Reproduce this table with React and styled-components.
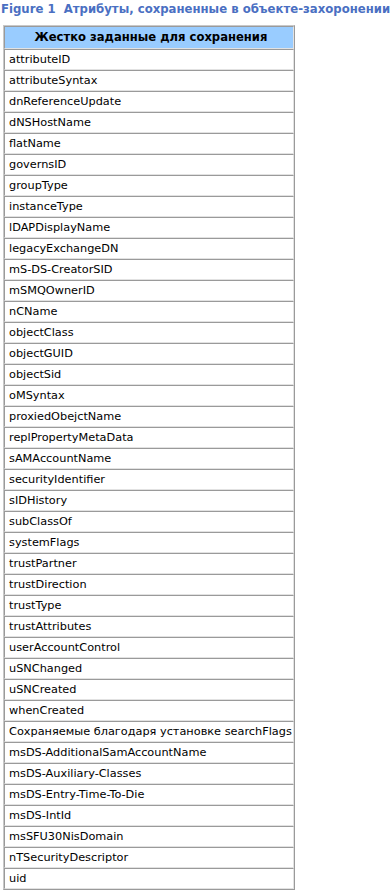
import styled, { createGlobalStyle } from 'styled-components';

const GlobalStyle = createGlobalStyle`
  body {
    margin: 0;
    background: #ffffff;
    font-family: "DejaVu Sans", Verdana, sans-serif;
  }
`;

const hardCoded = [
  'attributeID', 'attributeSyntax', 'dnReferenceUpdate', 'dNSHostName', 'flatName',
  'governsID', 'groupType', 'instanceType', 'lDAPDisplayName', 'legacyExchangeDN',
  'mS-DS-CreatorSID', 'mSMQOwnerID', 'nCName', 'objectClass', 'objectGUID',
  'objectSid', 'oMSyntax', 'proxiedObejctName', 'replPropertyMetaData', 'sAMAccountName',
  'securityIdentifier', 'sIDHistory', 'subClassOf', 'systemFlags', 'trustPartner',
  'trustDirection', 'trustType', 'trustAttributes', 'userAccountControl', 'uSNChanged',
  'uSNCreated', 'whenCreated',
];

const bySearchFlags = [
  'msDS-AdditionalSamAccountName', 'msDS-Auxiliary-Classes', 'msDS-Entry-Time-To-Die',
  'msDS-IntId', 'msSFU30NisDomain', 'nTSecurityDescriptor', 'uid',
];

const Page = styled.div`
  padding: 3px 0 0 1px;
  overflow: hidden;
`;

const Title = styled.div`
  font-family: "DejaVu Sans", Verdana, sans-serif;
  font-size: 11.7px;
  font-weight: bold;
  color: #4a6fc2;
  white-space: nowrap;
  line-height: 13px;
`;

const Table = styled.table`
  margin: 9px 0 0 2px;
  width: 292px;
  border-collapse: separate;
  border-spacing: 0;
  border: 1px solid;
  border-color: #c8c8c8 #9a9a9a #9a9a9a #c8c8c8;

  tr { height: 21px; }
  tr:first-child { height: 23px; }
`;

const Cell = styled.td`
  padding: 0 0 0 4px;
  font-size: 11.3px;
  line-height: 13px;
  color: #000;
  white-space: nowrap;
  border: 1px solid;
  border-color: #9a9a9a #e2e2e2 #e2e2e2 #9a9a9a;
  background: ${(p) => (p.$head ? '#99ccff' : '#ffffff')};
  font-weight: ${(p) => (p.$head ? 'bold' : 'normal')};
  font-size: ${(p) => (p.$head ? '11.6px' : '11.3px')};
  text-align: ${(p) => (p.$head ? 'center' : 'left')};
`;

export default function App() {
  return (
    <Page>
      <GlobalStyle />
      <Title>Figure 1&nbsp;&nbsp;Атрибуты, сохраненные в объекте-захоронении</Title>
      <Table>
        <tbody>
          <tr><Cell $head>Жестко заданные для сохранения</Cell></tr>
          {hardCoded.map((name) => (
            <tr key={name}><Cell>{name}</Cell></tr>
          ))}
          <tr><Cell>Сохраняемые благодаря установке searchFlags</Cell></tr>
          {bySearchFlags.map((name) => (
            <tr key={name}><Cell>{name}</Cell></tr>
          ))}
        </tbody>
      </Table>
    </Page>
  );
}
